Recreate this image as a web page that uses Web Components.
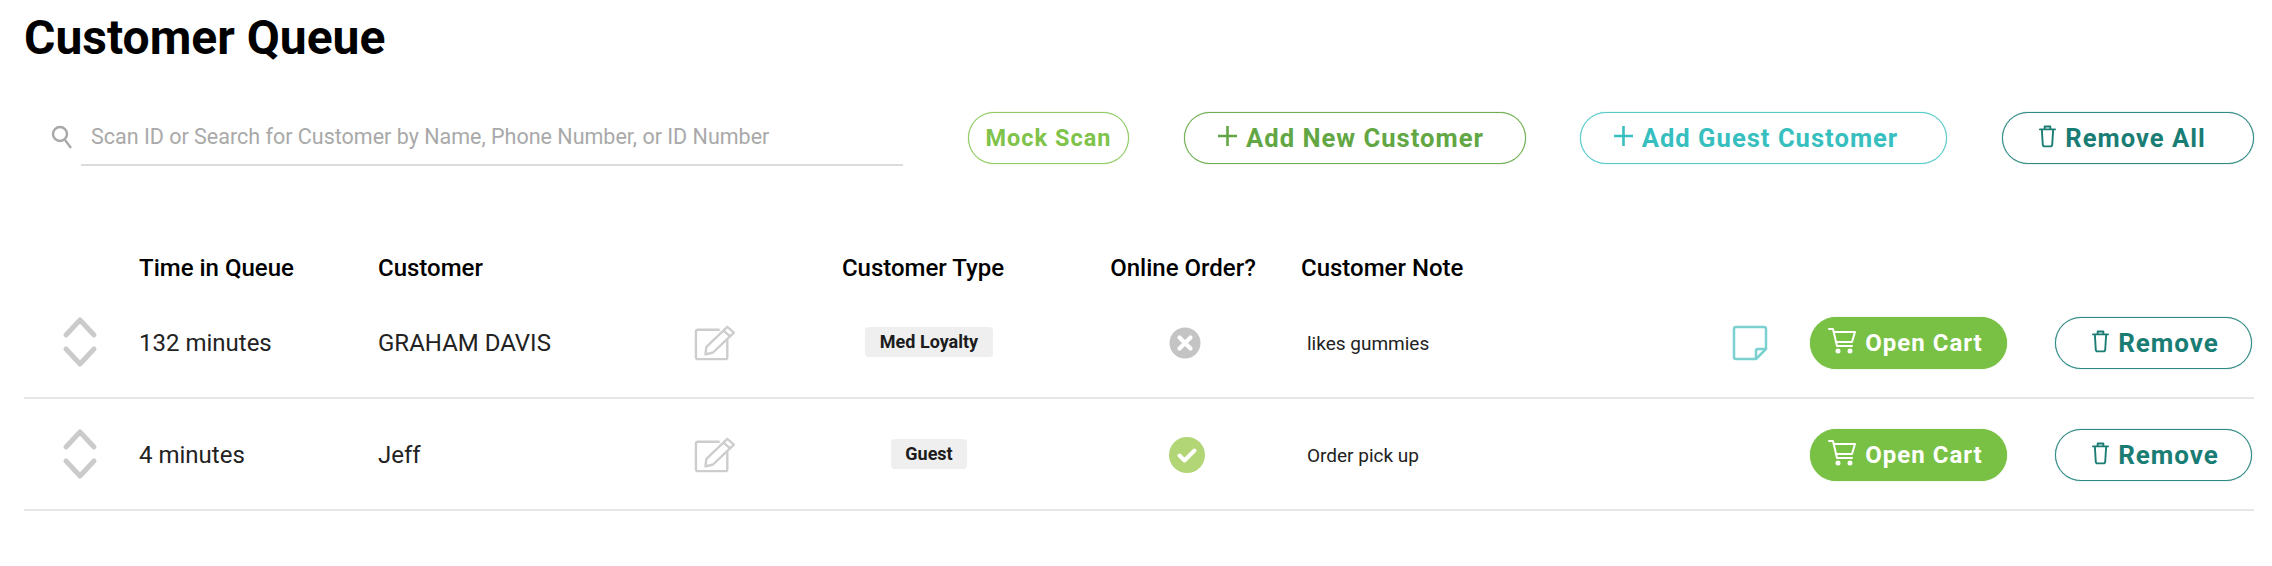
<!DOCTYPE html>
<html lang="en">
<head>
<meta charset="utf-8">
<title>Customer Queue</title>
<style>
  html, body { margin: 0; background: #fff; }
  body { font-family: Roboto, "Liberation Sans", sans-serif; color: #000; }
</style>
</head>
<body>
<queue-page>
  <queue-toolbar>
    <search-box placeholder="Scan ID or Search for Customer by Name, Phone Number, or ID Number"></search-box>
    <pill-button kind="mock" size="23.5" style="width:161px">Mock Scan</pill-button>
    <pill-button kind="add" icon="plus" size="25.6" shift="-8" style="width:342px">Add New Customer</pill-button>
    <pill-button kind="guest" icon="plus" size="25.6" shift="-14" style="width:367px;margin-left:-1.5px">Add Guest Customer</pill-button>
    <pill-button kind="remove" icon="trash" size="25.6" shift="-10" style="width:252px">Remove All</pill-button>
  </queue-toolbar>
  <queue-header></queue-header>
  <queue-row time="132 minutes" customer="GRAHAM DAVIS" type="Med Loyalty" note="likes gummies" has-note></queue-row>
  <queue-row time="4 minutes" customer="Jeff" type="Guest" note="Order pick up" online></queue-row>
</queue-page>

<script>
const ICONS = {
  plus: `<svg width="19" height="22" viewBox="0 0 19 22" fill="none" stroke="currentColor" stroke-width="2.6"><path d="M9.500 1v20M0 11h19"/></svg>`,
  trash: `<svg width="17" height="24" viewBox="0 0 18 24" fill="none" stroke="currentColor" stroke-width="2" stroke-linejoin="round" stroke-linecap="round"><path d="M1 5h16M6 5V2h6v3M3 5l1 16a2 2 0 0 0 2 2h6a2 2 0 0 0 2-2l1-16"/></svg>`,
  cart: `<svg width="28" height="26" viewBox="0 0 28 26" fill="none" stroke="currentColor" stroke-width="2" stroke-linejoin="round" stroke-linecap="round"><path d="M1 1h4l4 17h15"/><path d="M6 4h21l-3 10H8.500"/><circle cx="10" cy="23" r="1.500" fill="currentColor"/><circle cx="22" cy="23" r="1.500" fill="currentColor"/></svg>`,
  search: `<svg width="22" height="24" viewBox="0 0 22 24" fill="none" stroke="#a8a8a8" stroke-width="2.400"><circle cx="9" cy="9" r="7"/><path d="M14 15l6 8"/></svg>`,
  sort: `<svg width="36" height="54" viewBox="0 0 36 54" fill="none" stroke="#cbcbcb" stroke-width="5" stroke-linecap="round" stroke-linejoin="round"><path d="M4 20L18 5l14 15M4 34l14 15 14-15"/></svg>`,
  edit: `<svg width="42" height="38" viewBox="0 0 44 40" fill="none" stroke="#cdcdcd" stroke-width="2.500" stroke-linejoin="round" stroke-linecap="round"><path d="M27 6H5a2 2 0 0 0-2 2v27a2 2 0 0 0 2 2h29a2 2 0 0 0 2-2V17"/><path d="M13 32l1-8L36 3l7 6-22 21zM32 7l7 6"/></svg>`,
  note: `<svg width="36" height="36" viewBox="0 0 36 36" fill="none" stroke="#7bd0d0" stroke-width="2.500" stroke-linejoin="round"><path d="M4 2h28a2 2 0 0 1 2 2v20L24 34H4a2 2 0 0 1-2-2V4a2 2 0 0 1 2-2z"/><path d="M34 24h-8a2 2 0 0 0-2 2v8"/></svg>`,
  no: `<svg width="32" height="32" viewBox="0 0 32 32"><circle cx="16" cy="16" r="15.500" fill="#c4c4c4"/><path d="M10.500 10.500l11 11M21.500 10.500l-11 11" stroke="#fff" stroke-width="4.200" stroke-linecap="round"/></svg>`,
  yes: `<svg width="36" height="36" viewBox="0 0 36 36"><circle cx="18" cy="18" r="18" fill="#b2d676"/><path d="M10.500 18.500l5 5 10-10" fill="none" stroke="#fff" stroke-width="4" stroke-linecap="round" stroke-linejoin="round"/></svg>`
};

class QueuePage extends HTMLElement {
  constructor() {
    super();
    this.attachShadow({ mode: 'open' });
    this.shadowRoot.innerHTML = `
      <style>
        :host { display: block; padding: 0 18px 0 24px; }
        h1 { margin: 0; padding-top: 12px; font-size: 48px; line-height: 52px; font-weight: 700; height: 64px; }
      </style>
      <h1>Customer Queue</h1>
      <slot></slot>
    `;
  }
}

class QueueToolbar extends HTMLElement {
  constructor() {
    super();
    this.attachShadow({ mode: 'open' });
    this.shadowRoot.innerHTML = `
      <style>
        :host { display: flex; align-items: center; gap: 55px; margin-top: 36px; margin-right: -3px; height: 52px; }
      </style>
      <slot></slot>
    `;
  }
}

class SearchBox extends HTMLElement {
  constructor() {
    super();
    this.attachShadow({ mode: 'open' });
  }

  connectedCallback() {
    const placeholder = this.getAttribute('placeholder') || '';
    this.shadowRoot.innerHTML = `
      <style>
        :host { display: flex; align-items: center; width: 852px; margin-right: 10px; height: 52px; margin-left: 27px; }
        .icon { width: 30px; display: flex; padding-bottom: 2px; }
        .field { flex: 1; height: 54px; margin-top: 2px; padding-bottom: 4px; box-sizing: border-box; border-bottom: 2px solid #dcdcdc; display: flex; align-items: center; padding-left: 10px; }
        input { border: 0; outline: 0; padding: 0; width: 100%; font: 400 21.5px Roboto, sans-serif; background: transparent; }
        input::placeholder { color: #a9a9a9; opacity: 1; }
      </style>
      <span class="icon">${ICONS.search}</span>
      <div class="field"><input placeholder="${placeholder}"></div>
    `;
  }
}

class PillButton extends HTMLElement {
  static COLORS = {
    mock: ['#7fc34a', '#8fcb63'],
    add: ['#62a744', '#6fae52'],
    guest: ['#37bfbf', '#57caca'],
    remove: ['#1a7d74', '#2e8a82']
  };

  constructor() {
    super();
    this.attachShadow({ mode: 'open' });
  }

  connectedCallback() {
    const kind = this.getAttribute('kind') || 'remove';
    const icon = this.getAttribute('icon');
    const size = this.getAttribute('size') || 24;
    // shift < 0 pushes the label left of centre, shift > 0 pushes it right
    const shift = Number(this.getAttribute('shift') || 0);
    let color, border, bg;
    if (kind === 'cart') {
      color = '#fff'; border = '#78c145'; bg = '#78c145';
    } else {
      [color, border] = PillButton.COLORS[kind];
      bg = '#fff';
    }
    this.shadowRoot.innerHTML = `
      <style>
        :host { display: inline-flex; box-sizing: border-box; height: 52px; flex: none; }
        button {
          width: 100%; height: 100%; border: 1px solid ${border}; border-radius: 26px;
          box-shadow: 0 0 1px ${border};
          padding: 0 ${shift < 0 ? -shift : 0}px 0 ${shift > 0 ? shift : 0}px;
          background: ${bg}; color: ${color}; font: 700 ${size}px Roboto, sans-serif; letter-spacing: 1px;
          display: flex; align-items: center; justify-content: center; gap: 9px;
        }
        svg { display: block; margin-top: -4px; }
      </style>
      <button>${icon ? ICONS[icon] : ''}<slot></slot></button>
    `;
  }
}

const GRID = `display: grid; grid-template-columns: 115px 239px 312px 48px 370px 150px 43px 425px 48px 36px 197px 48px 197px 2px; align-items: center;`;

class QueueHeader extends HTMLElement {
  constructor() {
    super();
    this.attachShadow({ mode: 'open' });
    this.shadowRoot.innerHTML = `
      <style>
        :host { ${GRID} margin-top: 84px; height: 39px; font-size: 24px; font-weight: 500; line-height: 26px; }
        .c { text-align: center; }
      </style>
      <span></span><span>Time in Queue</span><span>Customer</span><span></span>
      <span class="c">Customer Type</span><span class="c">Online Order?</span><span></span>
      <span>Customer Note</span>
    `;
  }
}

class QueueRow extends HTMLElement {
  constructor() {
    super();
    this.attachShadow({ mode: 'open' });
  }

  connectedCallback() {
    const attr = name => this.getAttribute(name) || '';
    const online = this.hasAttribute('online');
    this.shadowRoot.innerHTML = `
      <style>
        :host { ${GRID} height: 112px; box-sizing: border-box; padding-top: 2px; border-bottom: 2px solid #e6e6e6; font-size: 24px; font-weight: 400; color: #222; }
        .sort { display: flex; justify-content: center; padding-right: 2px; width: 112px; }
        .sort svg { display: block; margin-top: -3px; }
        .mid { display: flex; justify-content: center; align-items: center; }
        .mid svg { display: block; }
        .type { padding-left: 12px; padding-bottom: 2px; }
        .tag { background: #efefef; border-radius: 4px; font-size: 18px; font-weight: 700; line-height: 30px; padding: 0 14.500px; color: #1c1c1c; }
        .note { font-size: 19px; padding-left: 6px; }
        .online { padding-left: ${online ? 8 : 4}px; }
      </style>
      <div class="sort">${ICONS.sort}</div>
      <span>${attr('time')}</span>
      <span>${attr('customer')}</span>
      <div class="mid">${ICONS.edit}</div>
      <div class="mid type"><span class="tag">${attr('type')}</span></div>
      <div class="mid online">${online ? ICONS.yes : ICONS.no}</div>
      <span></span>
      <span class="note">${attr('note')}</span>
      <div class="mid">${this.hasAttribute('has-note') ? ICONS.note : ''}</div>
      <span></span>
      <pill-button kind="cart" icon="cart" shift="-6">Open Cart</pill-button>
      <span></span>
      <pill-button kind="remove" icon="trash" size="26" shift="4">Remove</pill-button>
    `;
  }
}

customElements.define('queue-page', QueuePage);
customElements.define('queue-toolbar', QueueToolbar);
customElements.define('search-box', SearchBox);
customElements.define('pill-button', PillButton);
customElements.define('queue-header', QueueHeader);
customElements.define('queue-row', QueueRow);
</script>
</body>
</html>
